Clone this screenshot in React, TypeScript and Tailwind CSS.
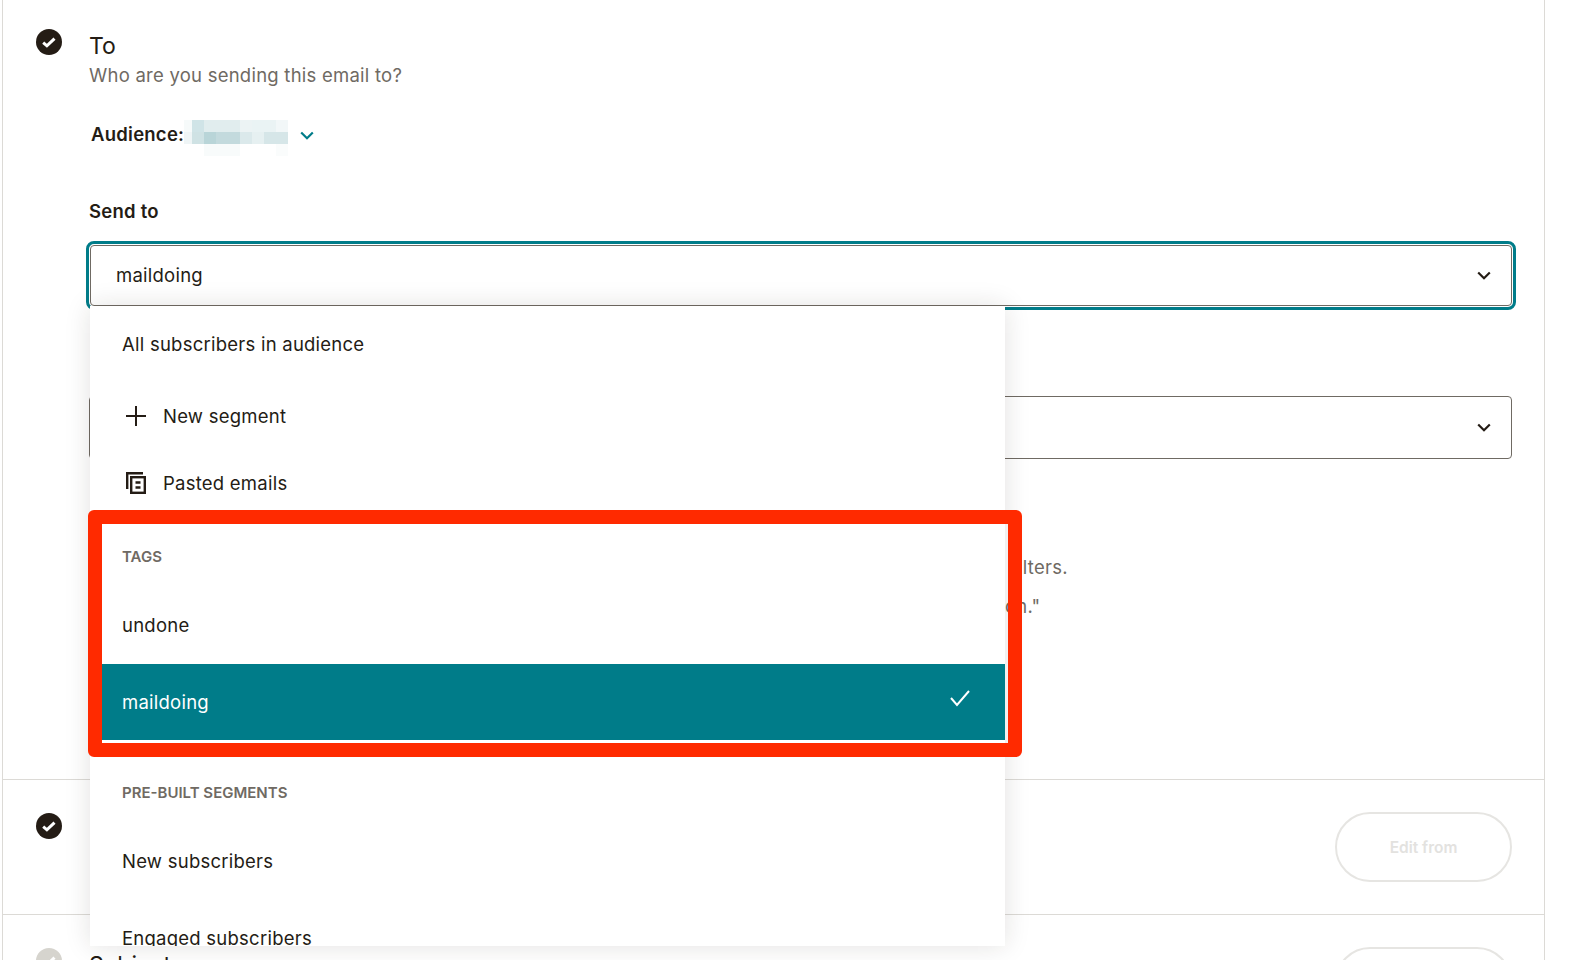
const FONT = "font-['Inter','Liberation_Sans',sans-serif]";

const BLUR = [
  { x: 184, y: 120, w: 8, h: 12, c: "#f6fafa" },
  { x: 192, y: 120, w: 12, h: 12, c: "#d0e4e7" },
  { x: 204, y: 120, w: 36, h: 12, c: "#e1edee" },
  { x: 240, y: 120, w: 12, h: 12, c: "#ecf3f4" },
  { x: 252, y: 120, w: 24, h: 12, c: "#eaf3f4" },
  { x: 276, y: 120, w: 12, h: 12, c: "#f2f7f8" },
  { x: 184, y: 132, w: 8, h: 12, c: "#eff5f6" },
  { x: 192, y: 132, w: 12, h: 12, c: "#cfe2e4" },
  { x: 204, y: 132, w: 12, h: 12, c: "#b9d5d8" },
  { x: 216, y: 132, w: 24, h: 12, c: "#c3dadd" },
  { x: 240, y: 132, w: 12, h: 12, c: "#dbe9eb" },
  { x: 252, y: 132, w: 12, h: 12, c: "#e6f0f1" },
  { x: 264, y: 132, w: 24, h: 12, c: "#d6e6e8" },
  { x: 204, y: 144, w: 36, h: 12, c: "#f8fbfb" },
  { x: 276, y: 144, w: 12, h: 12, c: "#fafcfc" },
];

function DoneIcon({ faded }: { faded?: boolean }) {
  return (
    <svg width="26" height="26" viewBox="0 0 26 26" className="shrink-0">
      <circle cx="13" cy="13" r="13" fill={faded ? "#d6d4ce" : "#241c15"} />
      <path d="M7.2 13.6l3.7 3.2 7.6-7.2" fill="none" stroke="#fff" strokeWidth="3" />
    </svg>
  );
}

function Chevron({ className }: { className?: string }) {
  return (
    <svg width="14" height="9" viewBox="0 0 14 9" className={className}>
      <path d="M1.2 1.5L7 7.2l5.8-5.7" fill="none" stroke="currentColor" strokeWidth="2.2" />
    </svg>
  );
}

function PasteIcon() {
  return (
    <svg width="20" height="22" viewBox="0 0 20 22" className="mb-[2px] text-[#241c15]">
      <path d="M1.2 17V1.2H17" fill="none" stroke="currentColor" strokeWidth="2.4" />
      <rect x="5.2" y="5.2" width="13.6" height="15.6" fill="none" stroke="currentColor" strokeWidth="2.4" />
      <path d="M9.5 10.5h5M9.5 15.5h5" fill="none" stroke="currentColor" strokeWidth="2.4" />
    </svg>
  );
}

function SelectBox({ value, className }: { value?: string; className?: string }) {
  return (
    <div className={`flex items-center justify-between rounded-[4px] border border-[#6f6a63] bg-white pl-[25px] pr-[20px] text-[#241c15] ${className ?? ""}`}>
      <span>{value}</span>
      <Chevron className="text-[#241c15]" />
    </div>
  );
}

function EditButton({ label }: { label: string }) {
  return (
    <button
      type="button"
      className="-mt-px flex h-[70px] w-[177px] shrink-0 items-center justify-center rounded-full border-2 border-[#e6e5e2] bg-white pt-[2px] text-[15.5px] font-semibold tracking-normal text-[#e3e2df]"
    >
      {label}
    </button>
  );
}

function MenuItem({ children, className }: { children: React.ReactNode; className?: string }) {
  return (
    <div className={`flex items-center pl-[32px] pt-[2px] text-[#241c15] ${className ?? ""}`}>
      {children}
    </div>
  );
}

function GroupLabel({ children, className }: { children: React.ReactNode; className?: string }) {
  return (
    <div className={`flex items-center pl-[32px] pt-[2px] text-[15px] font-semibold tracking-normal text-[#6f6a63] ${className ?? ""}`}>
      {children}
    </div>
  );
}

export default function App() {
  return (
    <div className={`relative h-[960px] w-[1590px] overflow-hidden bg-white text-[18.5px] tracking-[0.24px] ${FONT}`}>
      <div className="ml-[2px] w-[1543px] border-x border-[#dcdad6]">
        {/* To */}
        <section className="flex h-[780px] border-b border-[#dcdad6] pl-[33px] pr-[32px] pt-[29px]">
          <DoneIcon />
          <div className="ml-[27px] min-w-0 flex-1">
            <div className="text-[23px] leading-[34px] tracking-normal text-[#241c15]">To</div>
            <div className="leading-[25px] text-[#6f6a63]">Who are you sending this email to?</div>
            <div className="mt-[29px] flex h-[36px] items-center pl-[2px] font-semibold text-[#241c15]">
              Audience:
              <svg width="112" height="36" viewBox="184 120 112 36" className="mt-[6px]">
                {BLUR.map((b) => (
                  <rect key={`${b.x}-${b.y}`} x={b.x} y={b.y} width={b.w} height={b.h} fill={b.c} />
                ))}
              </svg>
              <Chevron className="ml-[4px] text-[#007c89]" />
            </div>
            <div className="mt-[45px] font-semibold leading-[26px] text-[#241c15]">Send to</div>
            <div className="-ml-[3px] mt-[17px] w-[1430px] rounded-[8px] border-[3px] border-[#007c89] bg-white p-px">
              <SelectBox value="maildoing" className="h-[61px]" />
            </div>
            <div className="mt-[86px] w-[1423px]">
              <SelectBox className="h-[63px]" />
            </div>
            <div className="mt-[89px] leading-[39px] text-[#6f6a63]">
              <p className="pl-[922px]">filters.</p>
              <p className="pl-[916px]">on."</p>
            </div>
          </div>
        </section>

        {/* From */}
        <section className="flex h-[135px] border-b border-[#dcdad6] pl-[33px] pr-[32px] pt-[33px]">
          <DoneIcon />
          <div className="flex-1" />
          <EditButton label="Edit from" />
        </section>

        {/* Subject */}
        <section className="flex h-[60px] pl-[33px] pr-[32px] pt-[33px]">
          <DoneIcon faded />
          <div className="ml-[27px] flex-1 text-[23px] leading-[34px] tracking-normal text-[#241c15]">Subject</div>
          <EditButton label="Edit subject" />
        </section>
      </div>

      {/* open dropdown */}
      <div className="absolute left-[90px] top-[306px] h-[640px] w-[915px] overflow-hidden bg-white shadow-[0_0_24px_rgba(36,28,21,0.13)]">
        <MenuItem className="h-[76px]">All subscribers in audience</MenuItem>
        <MenuItem className="mt-[1px] h-[66px] !pl-[35px]">
          <svg width="22" height="22" viewBox="0 0 22 22" className="mb-[2px] mr-[16px] text-[#241c15]">
            <path d="M11 1v20M1 11h20" fill="none" stroke="currentColor" strokeWidth="2" />
          </svg>
          New segment
        </MenuItem>
        <MenuItem className="h-[66px] !pl-[36px] !pt-[4px]">
          <PasteIcon />
          <span className="ml-[17px]">Pasted emails</span>
        </MenuItem>
        <GroupLabel className="mt-[7px] h-[68px]">TAGS</GroupLabel>
        <MenuItem className="mb-[4px] h-[70px]">undone</MenuItem>
        <MenuItem className="ml-[12px] h-[76px] justify-between bg-[#007c89] !pl-[20px] pr-[34px] !text-white">
          maildoing
          <svg width="22" height="18" viewBox="0 0 22 18" className="mb-[11px] text-white">
            <path d="M2 9l6 7L20 2" fill="none" stroke="currentColor" strokeWidth="2" />
          </svg>
        </MenuItem>
        <GroupLabel className="mt-[15px] h-[75px]">PRE-BUILT SEGMENTS</GroupLabel>
        <MenuItem className="h-[62px]">New subscribers</MenuItem>
        <MenuItem className="h-[92px]">Engaged subscribers</MenuItem>
      </div>

      {/* annotation */}
      <div className="pointer-events-none absolute left-[88px] top-[510px] h-[247px] w-[934px] rounded-[6px] border-[14px] border-[#ff2a00]" />
    </div>
  );
}
